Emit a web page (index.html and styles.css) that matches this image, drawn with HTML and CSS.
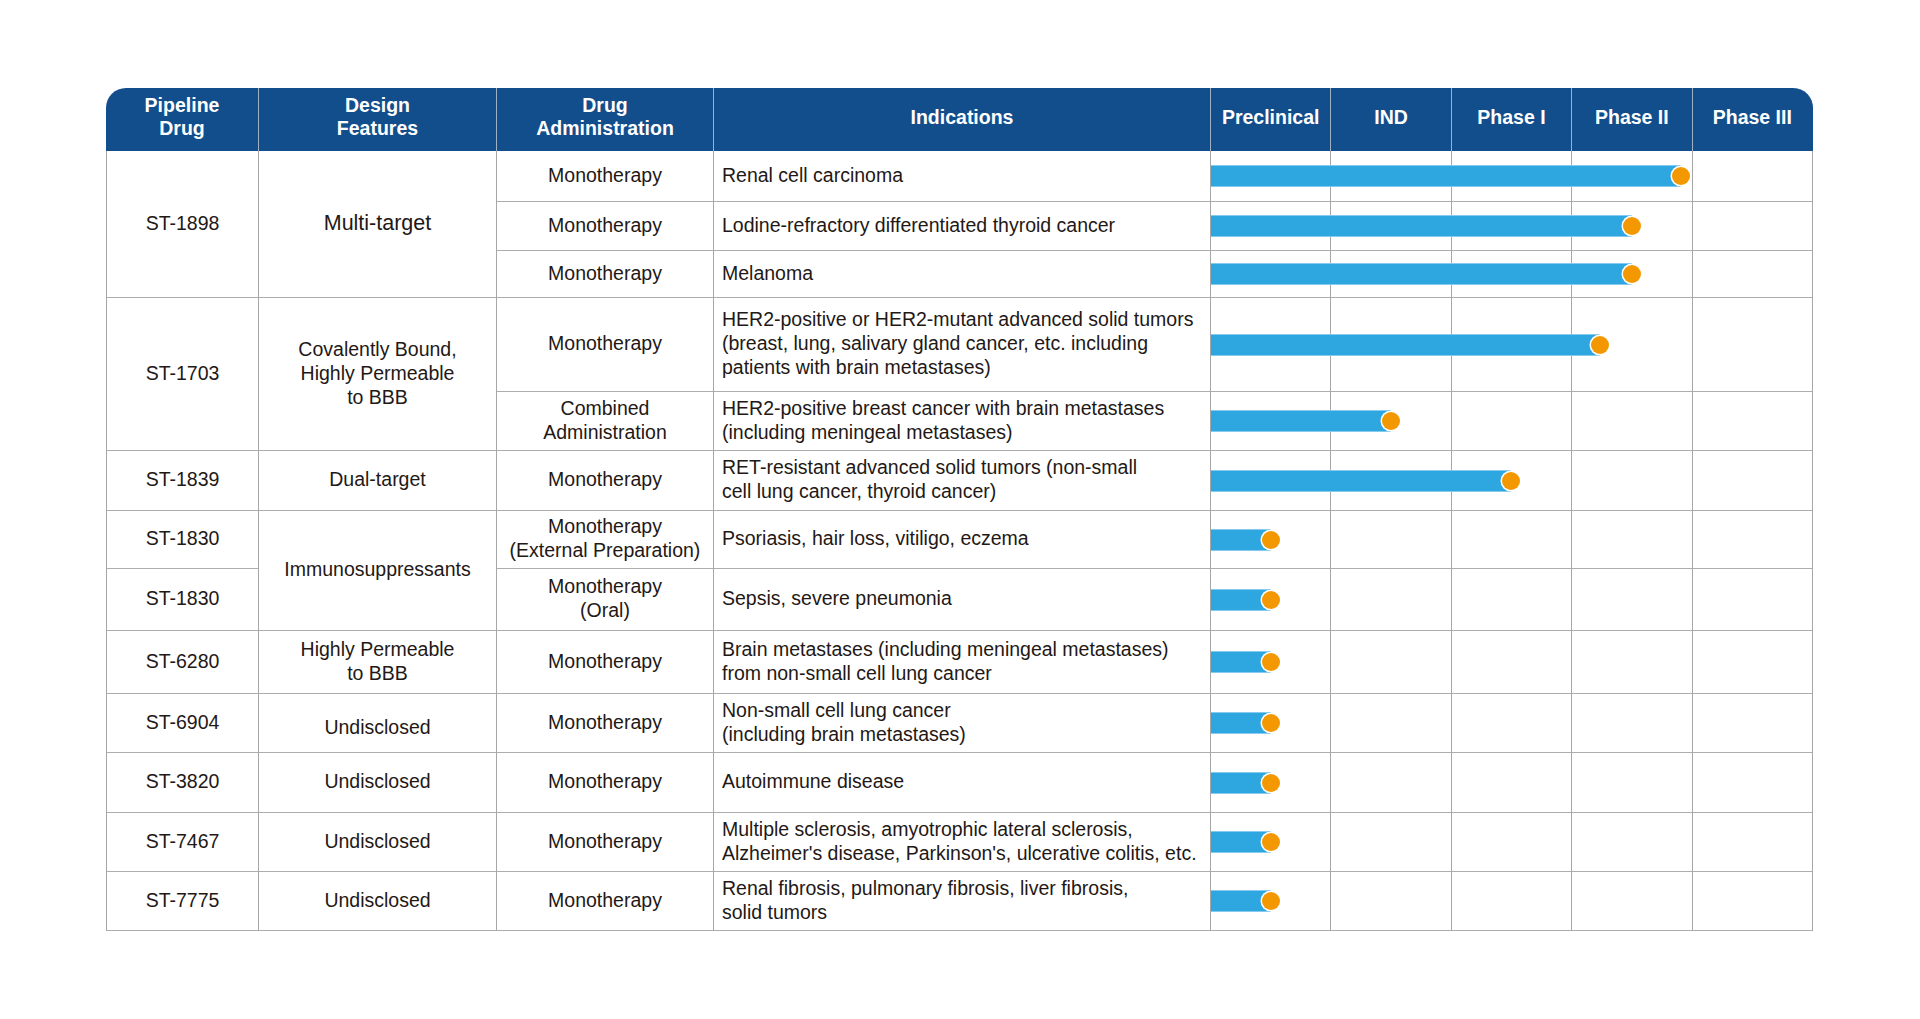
FILE: index.html
```html
<!DOCTYPE html>
<html lang="en">
<head>
<meta charset="utf-8">
<title>Pipeline</title>
<link rel="stylesheet" href="styles.css">
</head>
<body>
<div class="page">
<table class="pipeline">
  <colgroup>
    <col class="c-drug">
    <col class="c-design">
    <col class="c-admin">
    <col class="c-ind">
    <col class="c-phase"><col class="c-phase"><col class="c-phase"><col class="c-phase"><col class="c-phase">
  </colgroup>
  <thead>
    <tr class="hrow">
      <th class="first">Pipeline<br>Drug</th>
      <th>Design<br>Features</th>
      <th>Drug<br>Administration</th>
      <th>Indications</th>
      <th>Preclinical</th>
      <th>IND</th>
      <th>Phase I</th>
      <th>Phase II</th>
      <th class="last">Phase III</th>
    </tr>
  </thead>
  <tbody>
    <tr class="r1">
      <td class="drug" rowspan="3">ST-1898</td>
      <td class="big" rowspan="3">Multi-target</td>
      <td>Monotherapy</td>
      <td class="ind">Renal cell carcinoma</td>
      <td class="track"><div class="bar" style="width:470px"></div></td><td></td><td></td><td></td><td></td>
    </tr>
    <tr class="r2">
      <td>Monotherapy</td>
      <td class="ind">Lodine-refractory differentiated thyroid cancer</td>
      <td class="track"><div class="bar" style="width:421px"></div></td><td></td><td></td><td></td><td></td>
    </tr>
    <tr class="r3">
      <td>Monotherapy</td>
      <td class="ind">Melanoma</td>
      <td class="track"><div class="bar" style="width:421px"></div></td><td></td><td></td><td></td><td></td>
    </tr>
    <tr class="r4">
      <td class="drug" rowspan="2">ST-1703</td>
      <td rowspan="2">Covalently Bound,<br>Highly Permeable<br>to BBB</td>
      <td>Monotherapy</td>
      <td class="ind">HER2-positive or HER2-mutant advanced solid tumors<br>(breast, lung, salivary gland cancer, etc. including<br>patients with brain metastases)</td>
      <td class="track"><div class="bar" style="width:389px"></div></td><td></td><td></td><td></td><td></td>
    </tr>
    <tr class="r5">
      <td>Combined<br>Administration</td>
      <td class="ind">HER2-positive breast cancer with brain metastases<br>(including meningeal metastases)</td>
      <td class="track"><div class="bar" style="width:180px"></div></td><td></td><td></td><td></td><td></td>
    </tr>
    <tr class="r6">
      <td class="drug">ST-1839</td>
      <td>Dual-target</td>
      <td>Monotherapy</td>
      <td class="ind">RET-resistant advanced solid tumors (non-small<br>cell lung cancer, thyroid cancer)</td>
      <td class="track"><div class="bar" style="width:300px"></div></td><td></td><td></td><td></td><td></td>
    </tr>
    <tr class="r7">
      <td class="drug">ST-1830</td>
      <td rowspan="2">Immunosuppressants</td>
      <td>Monotherapy<br>(External Preparation)</td>
      <td class="ind">Psoriasis, hair loss, vitiligo, eczema</td>
      <td class="track"><div class="bar" style="width:60px"></div></td><td></td><td></td><td></td><td></td>
    </tr>
    <tr class="r8">
      <td class="drug">ST-1830</td>
      <td>Monotherapy<br>(Oral)</td>
      <td class="ind">Sepsis, severe pneumonia</td>
      <td class="track"><div class="bar" style="width:60px"></div></td><td></td><td></td><td></td><td></td>
    </tr>
    <tr class="r9">
      <td class="drug">ST-6280</td>
      <td>Highly Permeable<br>to BBB</td>
      <td>Monotherapy</td>
      <td class="ind">Brain metastases (including meningeal metastases)<br>from non-small cell lung cancer</td>
      <td class="track"><div class="bar" style="width:60px"></div></td><td></td><td></td><td></td><td></td>
    </tr>
    <tr class="r10">
      <td class="drug">ST-6904</td>
      <td class="low">Undisclosed</td>
      <td>Monotherapy</td>
      <td class="ind">Non-small cell lung cancer<br>(including brain metastases)</td>
      <td class="track"><div class="bar" style="width:60px"></div></td><td></td><td></td><td></td><td></td>
    </tr>
    <tr class="r11">
      <td class="drug">ST-3820</td>
      <td>Undisclosed</td>
      <td>Monotherapy</td>
      <td class="ind">Autoimmune disease</td>
      <td class="track"><div class="bar" style="width:60px"></div></td><td></td><td></td><td></td><td></td>
    </tr>
    <tr class="r12">
      <td class="drug">ST-7467</td>
      <td>Undisclosed</td>
      <td>Monotherapy</td>
      <td class="ind">Multiple sclerosis, amyotrophic lateral sclerosis,<br>Alzheimer's disease, Parkinson's, ulcerative colitis, etc.</td>
      <td class="track"><div class="bar" style="width:60px"></div></td><td></td><td></td><td></td><td></td>
    </tr>
    <tr class="r13">
      <td class="drug">ST-7775</td>
      <td>Undisclosed</td>
      <td>Monotherapy</td>
      <td class="ind">Renal fibrosis, pulmonary fibrosis, liver fibrosis,<br>solid tumors</td>
      <td class="track"><div class="bar" style="width:60px"></div></td><td></td><td></td><td></td><td></td>
    </tr>
  </tbody>
</table>
</div>
</body>
</html>
```

FILE: styles.css
```css
html, body {
  margin: 0;
  padding: 0;
  background: #ffffff;
}

body {
  font-family: "Liberation Sans", Arial, Helvetica, sans-serif;
}

.page {
  padding: 88px 0 0 106px;
}

.pipeline {
  border-collapse: separate;
  border-spacing: 0;
  table-layout: fixed;
  width: 1707px;
  font-size: 19.5px;
  color: #231815;
}

.c-drug { width: 153px; }
.c-design { width: 238px; }
.c-admin { width: 217px; }
.c-ind { width: 497px; }
.c-phase { width: 120.4px; }

.pipeline th {
  box-sizing: border-box;
  background: #124e8c;
  color: #ffffff;
  font-weight: 700;
  line-height: 23px;
  padding: 0 0 5px;
  text-align: center;
  vertical-align: middle;
  border-right: 1px solid #9fb1c7;
  white-space: nowrap;
}

.pipeline th.first {
  border-top-left-radius: 20px;
}

.pipeline th.last {
  border-top-right-radius: 20px;
  border-right-color: #124e8c;
}

.pipeline td {
  box-sizing: border-box;
  border-right: 1px solid #a6a6a6;
  border-bottom: 1px solid #adadad;
  text-align: center;
  vertical-align: middle;
  line-height: 24px;
  padding: 0 4px 3px;
  white-space: nowrap;
}

.pipeline td.drug {
  border-left: 1px solid #a6a6a6;
}

.pipeline td.big {
  font-size: 21.5px;
}

.pipeline td.ind {
  text-align: left;
  padding-left: 8px;
}

.pipeline td.low {
  padding-top: 10px;
}

.pipeline td.track {
  position: relative;
  padding: 0;
}

.bar {
  position: absolute;
  left: 0;
  top: 50%;
  height: 22px;
  margin-top: -11px;
  background: #2ea7e0;
  box-shadow: inset 0 1px 0 #86cbee, inset 0 -1px 0 #86cbee;
  z-index: 1;
}

.bar::after {
  content: "";
  position: absolute;
  right: -9px;
  top: 2px;
  width: 18px;
  height: 18px;
  border-radius: 50%;
  background: #f39800;
  box-shadow: 0 0 0 1.5px #ffffff;
}

.hrow { height: 63px; }
.r1 { height: 51px; }
.r2 { height: 49px; }
.r3 { height: 47px; }
.r4 { height: 94px; }
.r5 { height: 59px; }
.r6 { height: 60px; }
.r7 { height: 58px; }
.r8 { height: 62px; }
.r9 { height: 63px; }
.r10 { height: 59px; }
.r11 { height: 60px; }
.r12 { height: 59px; }
.r13 { height: 59px; }
```
